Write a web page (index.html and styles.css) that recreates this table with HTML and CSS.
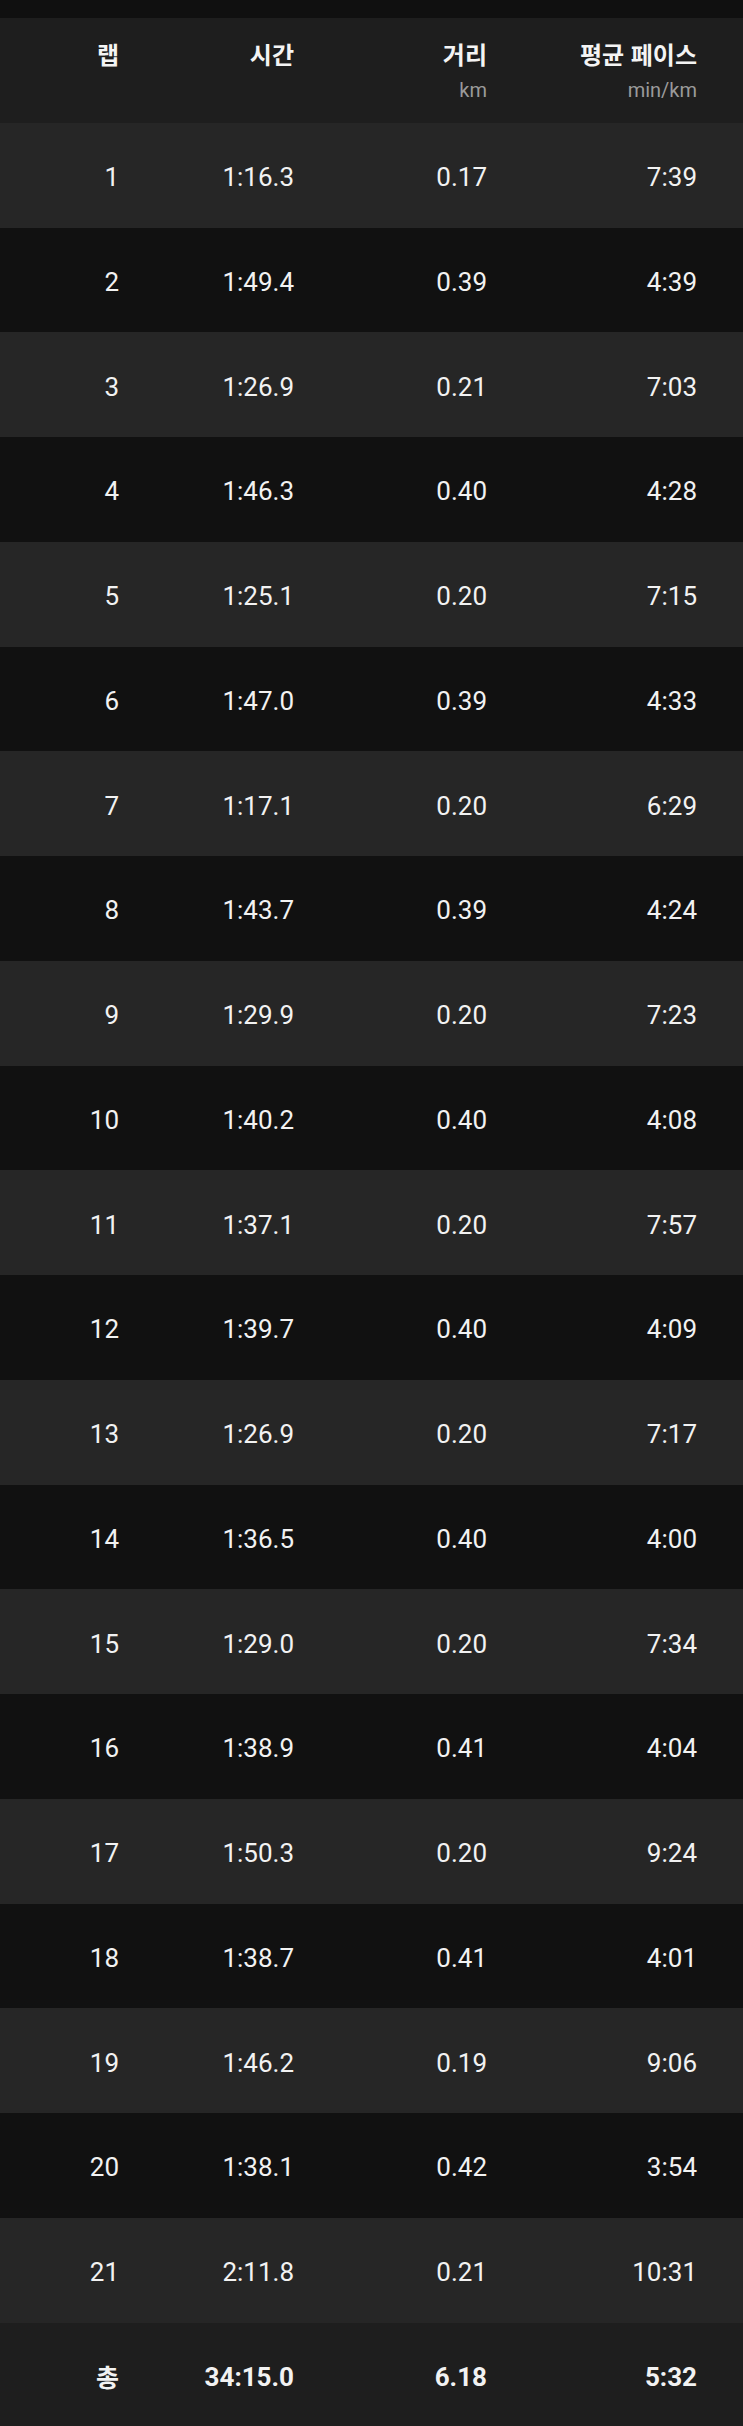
FILE: index.html
```html
<!DOCTYPE html>
<html lang="ko">
<head>
<meta charset="utf-8">
<link rel="stylesheet" href="styles.css">
</head>
<body>
<div class="page">
  <div class="topbar"></div>
  <div class="laps">
    <div class="row head">
      <div class="cell"><span class="title">랩</span></div>
      <div class="cell"><span class="title">시간</span></div>
      <div class="cell"><span class="title">거리</span><span class="unit">km</span></div>
      <div class="cell"><span class="title">평균 페이스</span><span class="unit">min/km</span></div>
    </div>
    <div class="row odd"><div class="cell">1</div><div class="cell">1:16.3</div><div class="cell">0.17</div><div class="cell">7:39</div></div>
    <div class="row even"><div class="cell">2</div><div class="cell">1:49.4</div><div class="cell">0.39</div><div class="cell">4:39</div></div>
    <div class="row odd"><div class="cell">3</div><div class="cell">1:26.9</div><div class="cell">0.21</div><div class="cell">7:03</div></div>
    <div class="row even"><div class="cell">4</div><div class="cell">1:46.3</div><div class="cell">0.40</div><div class="cell">4:28</div></div>
    <div class="row odd"><div class="cell">5</div><div class="cell">1:25.1</div><div class="cell">0.20</div><div class="cell">7:15</div></div>
    <div class="row even"><div class="cell">6</div><div class="cell">1:47.0</div><div class="cell">0.39</div><div class="cell">4:33</div></div>
    <div class="row odd"><div class="cell">7</div><div class="cell">1:17.1</div><div class="cell">0.20</div><div class="cell">6:29</div></div>
    <div class="row even"><div class="cell">8</div><div class="cell">1:43.7</div><div class="cell">0.39</div><div class="cell">4:24</div></div>
    <div class="row odd"><div class="cell">9</div><div class="cell">1:29.9</div><div class="cell">0.20</div><div class="cell">7:23</div></div>
    <div class="row even"><div class="cell">10</div><div class="cell">1:40.2</div><div class="cell">0.40</div><div class="cell">4:08</div></div>
    <div class="row odd"><div class="cell">11</div><div class="cell">1:37.1</div><div class="cell">0.20</div><div class="cell">7:57</div></div>
    <div class="row even"><div class="cell">12</div><div class="cell">1:39.7</div><div class="cell">0.40</div><div class="cell">4:09</div></div>
    <div class="row odd"><div class="cell">13</div><div class="cell">1:26.9</div><div class="cell">0.20</div><div class="cell">7:17</div></div>
    <div class="row even"><div class="cell">14</div><div class="cell">1:36.5</div><div class="cell">0.40</div><div class="cell">4:00</div></div>
    <div class="row odd"><div class="cell">15</div><div class="cell">1:29.0</div><div class="cell">0.20</div><div class="cell">7:34</div></div>
    <div class="row even"><div class="cell">16</div><div class="cell">1:38.9</div><div class="cell">0.41</div><div class="cell">4:04</div></div>
    <div class="row odd"><div class="cell">17</div><div class="cell">1:50.3</div><div class="cell">0.20</div><div class="cell">9:24</div></div>
    <div class="row even"><div class="cell">18</div><div class="cell">1:38.7</div><div class="cell">0.41</div><div class="cell">4:01</div></div>
    <div class="row odd"><div class="cell">19</div><div class="cell">1:46.2</div><div class="cell">0.19</div><div class="cell">9:06</div></div>
    <div class="row even"><div class="cell">20</div><div class="cell">1:38.1</div><div class="cell">0.42</div><div class="cell">3:54</div></div>
    <div class="row odd"><div class="cell">21</div><div class="cell">2:11.8</div><div class="cell">0.21</div><div class="cell">10:31</div></div>
    <div class="row total"><div class="cell">총</div><div class="cell">34:15.0</div><div class="cell">6.18</div><div class="cell">5:32</div></div>
  </div>
</div>
</body>
</html>
```
FILE: styles.css
```css
html, body {
  margin: 0;
  padding: 0;
  background: #101010;
}
.page {
  width: 743px;
  font-family: Roboto, "Noto Sans CJK KR", sans-serif;
  color: #f2f2f2;
}
.topbar {
  height: 18px;
  background: #101010;
}
.laps {
  display: flex;
  flex-direction: column;
}
.row {
  display: grid;
  grid-template-columns: 119px 175px 193px 210px;
  padding-right: 46px;
  height: 104.75px;
  align-items: center;
  font-size: 26px;
}
.cell {
  text-align: right;
  line-height: 1;
  padding-top: 4px;
}
.odd { background: #262626; }
.even { background: #111111; }
.total { background: #1e1e1e; font-weight: 700; }
.total .cell:first-child {
  font-family: "Noto Sans CJK KR", sans-serif;
  font-size: 25px;
}
.head {
  background: #1e1e1e;
  align-items: start;
}
.head .cell {
  display: flex;
  flex-direction: column;
  align-items: flex-end;
  padding-top: 22px;
}
.title {
  font-family: "Noto Sans CJK KR", sans-serif;
  font-weight: 700;
  font-size: 24px;
  line-height: 28px;
  color: #f4f4f4;
}
.unit {
  font-family: Roboto, sans-serif;
  font-size: 20px;
  line-height: 24px;
  margin-top: 10px;
  color: #9a9a9a;
}
```
